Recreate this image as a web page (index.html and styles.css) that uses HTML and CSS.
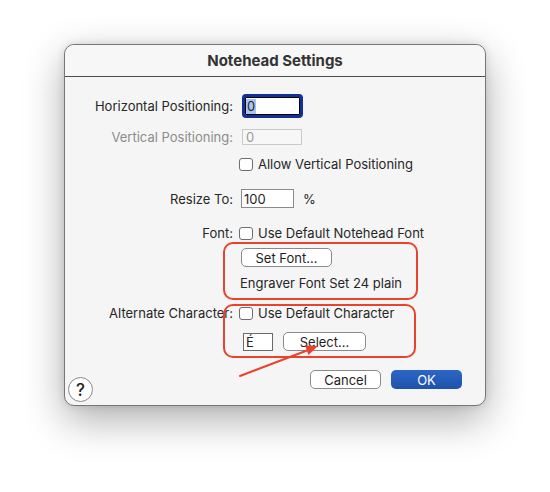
FILE: index.html
```html
<!DOCTYPE html>
<html>
<head>
<meta charset="utf-8">
<link rel="stylesheet" href="styles.css">
</head>
<body>
<div class="stage">
  <div class="window">
    <div class="titlebar">Notehead Settings</div>
    <div class="content">
      <div class="row r1">
        <div class="label">Horizontal Positioning:</div>
        <div class="field focus"><span class="sel">0</span></div>
      </div>
      <div class="row r2">
        <div class="label disabled">Vertical Positioning:</div>
        <div class="field dis">0</div>
      </div>
      <div class="row r3">
        <div class="label"></div>
        <div class="check"><span class="box"></span>Allow Vertical Positioning</div>
      </div>
      <div class="row r4">
        <div class="label">Resize To:</div>
        <div class="field plain">100</div>
        <div class="pct">%</div>
      </div>
      <div class="row r5">
        <div class="label">Font:</div>
        <div class="check"><span class="box"></span>Use Default Notehead Font</div>
      </div>
      <div class="row r6">
        <div class="label"></div>
        <div class="btn setfont">Set Font...</div>
      </div>
      <div class="row r7">
        <div class="label"></div>
        <div class="info">Engraver Font Set 24 plain</div>
      </div>
      <div class="row r8">
        <div class="label">Alternate Character:</div>
        <div class="check"><span class="box"></span>Use Default Character</div>
      </div>
      <div class="row r9">
        <div class="label"></div>
        <div class="charbox">É</div>
        <div class="btn select">Select...</div>
      </div>
      <div class="footer">
        <div class="help">?</div>
        <div class="actions">
          <div class="btn cancel">Cancel</div>
          <div class="btn ok">OK</div>
        </div>
      </div>
    </div>
    <div class="mark mark1"></div>
    <div class="mark mark2"></div>
    <svg class="arrow" width="422" height="362" viewBox="0 0 422 362">
      <line x1="176" y1="332" x2="243" y2="306.5" stroke="#e8432e" stroke-width="2" stroke-linecap="round"/>
      <polygon points="254,302 244.5,311 241,301.5" fill="#e8432e"/>
    </svg>
  </div>
</div>
</body>
</html>
```

FILE: styles.css
```css
html, body {
  margin: 0;
  padding: 0;
  background: #ffffff;
}
body {
  width: 550px;
  height: 492px;
  overflow: hidden;
  font-family: Inter, "Liberation Sans", Arial, sans-serif;
  font-size: 13px;
  color: #262626;
}
.stage {
  padding: 44px 0 0 64px;
}
.window {
  position: relative;
  box-sizing: border-box;
  width: 422px;
  height: 362px;
  border: 1px solid #767676;
  border-radius: 10px;
  background: #f5f5f5;
  box-shadow: 0 14px 40px rgba(0, 0, 0, 0.32), 0 0 8px rgba(0, 0, 0, 0.12);
}
.titlebar {
  height: 31px;
  border-bottom: 1px solid #4d4d4d;
  display: flex;
  align-items: center;
  justify-content: center;
  font-weight: bold;
  font-size: 15px;
  color: #333;
  background: #f7f7f7;
  border-radius: 10px 10px 0 0;
}
.content {
  display: flex;
  flex-direction: column;
}
.row {
  display: flex;
  align-items: center;
}
.label {
  width: 168px;
  flex: none;
  text-align: right;
  white-space: nowrap;
}
.label.disabled {
  color: #8c8c8c;
}
.r1 { margin-top: 17px; height: 24px; }
.r2 { margin-top: 11px; height: 16px; }
.r3 { margin-top: 12px; height: 14px; }
.r4 { margin-top: 18px; height: 19px; }
.r5 { margin-top: 18px; height: 14px; }
.r6 { margin-top: 8px; height: 19px; }
.r7 { margin-top: 8px; height: 16px; }
.r8 { margin-top: 15px; height: 14px; }
.r9 { margin-top: 12px; height: 19px; }

.field {
  box-sizing: border-box;
  display: flex;
  align-items: center;
  background: #fff;
}
.field.focus {
  margin-left: 9px;
  width: 61px;
  height: 24px;
  border: 3px solid #13309a;
  border-radius: 4px;
  box-shadow: inset 0 0 0 1px #000;
  padding-left: 0;
}
.sel {
  background: #a9c4f0;
  padding: 0 1px 0 1px;
  margin-left: 1px;
  line-height: 15px;
}
.field.dis {
  margin-left: 9px;
  width: 60px;
  height: 16px;
  border: 1px solid #c9c9c9;
  background: #f7f7f7;
  color: #9a9a9a;
  padding-left: 3px;
}
.field.plain {
  margin-left: 8px;
  width: 53px;
  height: 19px;
  border: 1px solid #8a8a8a;
  padding-left: 2px;
}
.pct {
  margin-left: 9px;
}
.check {
  display: flex;
  align-items: center;
  margin-left: 6px;
  white-space: nowrap;
}
.box {
  box-sizing: border-box;
  width: 14px;
  height: 13px;
  border: 1px solid #6e6e6e;
  border-radius: 3px;
  background: #fff;
  margin-right: 5px;
}
.btn {
  box-sizing: border-box;
  height: 19px;
  display: flex;
  align-items: center;
  justify-content: center;
  border: 1px solid #8a8a8a;
  border-radius: 5px;
  background: #fff;
  color: #1e1e1e;
}
.setfont {
  margin-left: 8px;
  width: 91px;
}
.info {
  margin-left: 7px;
  white-space: nowrap;
}
.charbox {
  box-sizing: border-box;
  margin-left: 10px;
  width: 30px;
  height: 18px;
  border: 1px solid #6a6a6a;
  background: #fff;
  padding-left: 2px;
  display: flex;
  align-items: center;
  line-height: 16px;
}
.select {
  margin-left: 10px;
  width: 83px;
}
.footer {
  margin-top: 19px;
  display: flex;
  align-items: flex-start;
  justify-content: space-between;
  padding: 0 23px 0 3px;
}
.help {
  box-sizing: border-box;
  margin-top: 7px;
  width: 25px;
  height: 25px;
  border: 1px solid #8a8a8a;
  border-radius: 50%;
  background: #fff;
  display: flex;
  align-items: center;
  justify-content: center;
  font-size: 17px;
  font-weight: 500;
  color: #1e1e1e;
}
.actions {
  display: flex;
  gap: 10px;
}
.cancel {
  width: 71px;
}
.ok {
  width: 71px;
  border: none;
  background: linear-gradient(#2d66c6, #1f52aa);
  color: #fff;
}
.mark {
  position: absolute;
  box-sizing: border-box;
  border: 2px solid #e8432e;
  border-radius: 10px;
}
.mark1 {
  left: 158px;
  top: 197px;
  width: 195px;
  height: 58px;
}
.mark2 {
  left: 158px;
  top: 259px;
  width: 193px;
  height: 54px;
}
.arrow {
  position: absolute;
  left: -1px;
  top: -1px;
  pointer-events: none;
}
```
